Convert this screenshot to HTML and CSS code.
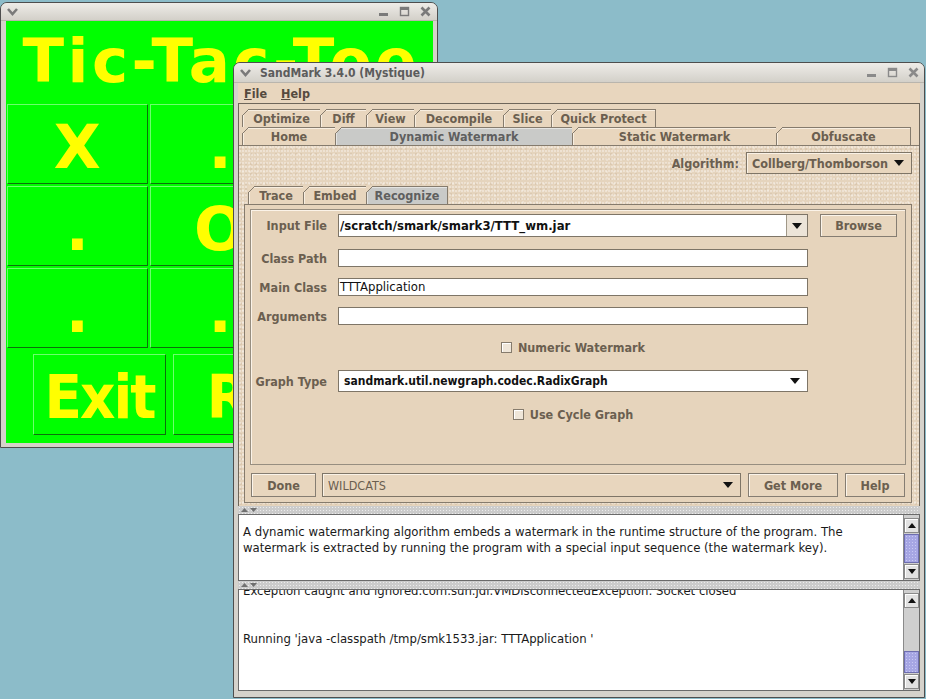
FILE: index.html
```html
<!DOCTYPE html>
<html>
<head>
<meta charset="utf-8">
<title>SandMark</title>
<link rel="stylesheet" href="styles.css">
</head>
<body>
<div class="win ttt">
  <div class="tbar ttt-bar">
    <svg class="ico" width="11" height="9" viewBox="0 0 11 9"><polyline points="1,2 5.5,7 10,2" fill="none" stroke="#7a7a7a" stroke-width="2.6"/></svg>
    <div class="ctrls">
      <svg class="ico" width="11" height="11" viewBox="0 0 11 11"><rect x="1" y="7" width="9" height="3" fill="#7a7a7a"/></svg>
      <svg class="ico" width="11" height="11" viewBox="0 0 11 11"><rect x="1.5" y="1.5" width="8" height="8" fill="none" stroke="#7a7a7a" stroke-width="1.4"/><rect x="1" y="1" width="9" height="3" fill="#7a7a7a"/></svg>
      <svg class="ico" width="11" height="11" viewBox="0 0 11 11"><path d="M1.5 1.5L9.5 9.5M9.5 1.5L1.5 9.5" stroke="#7a7a7a" stroke-width="2.6"/></svg>
    </div>
  </div>
  <div class="ttt-body">
    <div class="ttt-title">Tic-Tac-Toe</div>
    <div class="ttt-grid">
      <div class="cell">X</div><div class="cell">.</div><div class="cell">.</div>
      <div class="cell">.</div><div class="cell">O</div><div class="cell">.</div>
      <div class="cell">.</div><div class="cell">.</div><div class="cell">.</div>
    </div>
    <div class="ttt-btns">
      <div class="tbtn exit">Exit</div>
      <div class="tbtn reset">Reset</div>
    </div>
  </div>
</div>

<div class="win sm">
  <div class="tbar sm-bar">
    <svg class="ico" width="11" height="9" viewBox="0 0 11 9"><polyline points="1,2 5.5,7 10,2" fill="none" stroke="#7a7a7a" stroke-width="2.6"/></svg>
    <span class="wtitle">SandMark 3.4.0 (Mystique)</span>
    <div class="ctrls">
      <svg class="ico" width="11" height="11" viewBox="0 0 11 11"><rect x="1" y="7" width="9" height="3" fill="#8a8a8a"/></svg>
      <svg class="ico" width="11" height="11" viewBox="0 0 11 11"><rect x="1.5" y="1.5" width="8" height="8" fill="none" stroke="#8a8a8a" stroke-width="1.4"/><rect x="1" y="1" width="9" height="3" fill="#8a8a8a"/></svg>
      <svg class="ico" width="11" height="11" viewBox="0 0 11 11"><path d="M1.5 1.5L9.5 9.5M9.5 1.5L1.5 9.5" stroke="#8a8a8a" stroke-width="2.6"/></svg>
    </div>
  </div>
  <div class="sm-body">
    <div class="menubar">
      <span class="menu">File</span>
      <span class="menu">Help</span>
    </div>
    <div class="mainpane">
      <div class="tabrows">
        <div class="tabrow">
          <div class="tab w-opt">Optimize</div>
          <div class="tab w-diff">Diff</div>
          <div class="tab w-view">View</div>
          <div class="tab w-dec">Decompile</div>
          <div class="tab w-slice">Slice</div>
          <div class="tab w-qp">Quick Protect</div>
        </div>
        <div class="tabrow">
          <div class="tab w-home">Home</div>
          <div class="tab w-dyn sel">Dynamic Watermark</div>
          <div class="tab w-stat">Static Watermark</div>
          <div class="tab w-obf">Obfuscate</div>
        </div>
      </div>
      <div class="content">
        <div class="algrow">
          <span class="lbl">Algorithm:</span>
          <div class="combo alg"><span class="ctext">Collberg/Thomborson</span><svg class="tri" width="10" height="6" viewBox="0 0 10 6"><path d="M0 0h10L5 6z"/></svg></div>
        </div>
        <div class="tabrow subtabs">
          <div class="tab w-trace">Trace</div>
          <div class="tab w-embed">Embed</div>
          <div class="tab w-recog sel">Recognize</div>
        </div>
        <div class="subpane">
          <div class="formbox">
            <div class="frow r-input">
              <span class="lbl">Input File</span>
              <div class="ecombo">
                <span class="field bold">/scratch/smark/smark3/TTT_wm.jar</span>
                <span class="abtn"><svg class="tri" width="10" height="6" viewBox="0 0 10 6"><path d="M0 0h10L5 6z"/></svg></span>
              </div>
              <div class="btn">Browse</div>
            </div>
            <div class="frow r-txt">
              <span class="lbl">Class Path</span>
              <div class="tfield"></div>
            </div>
            <div class="frow r-txt">
              <span class="lbl">Main Class</span>
              <div class="tfield">TTTApplication</div>
            </div>
            <div class="frow r-txt">
              <span class="lbl">Arguments</span>
              <div class="tfield"></div>
            </div>
            <div class="frow r-chk r-num">
              <span></span>
              <div class="chk"><span class="box"></span><span class="lbl">Numeric Watermark</span></div>
            </div>
            <div class="frow r-graph">
              <span class="lbl">Graph Type</span>
              <div class="combo white"><span class="ctext dark">sandmark.util.newgraph.codec.RadixGraph</span><svg class="tri" width="10" height="6" viewBox="0 0 10 6"><path d="M0 0h10L5 6z"/></svg></div>
            </div>
            <div class="frow r-chk r-cyc">
              <span></span>
              <div class="chk"><span class="box"></span><span class="lbl">Use Cycle Graph</span></div>
            </div>
          </div>
          <div class="bottomrow">
            <div class="btn b-done">Done</div>
            <div class="combo b-wild"><span class="ctext light">WILDCATS</span><svg class="tri" width="10" height="6" viewBox="0 0 10 6"><path d="M0 0h10L5 6z"/></svg></div>
            <div class="btn b-more">Get More</div>
            <div class="btn b-help">Help</div>
          </div>
        </div>
      </div>
    </div>
    <div class="divider">
      <svg width="7" height="4" viewBox="0 0 7 4"><path d="M0 4h7L3.5 0z" fill="#707070"/></svg>
      <svg width="7" height="4" viewBox="0 0 7 4"><path d="M0 0h7L3.5 4z" fill="#707070"/></svg>
    </div>
    <div class="tarea ta-desc">
      <div class="txt"><div class="txt-in">A dynamic watermarking algorithm embeds a watermark in the runtime structure of the program. The<br>watermark is extracted by running the program with a special input sequence (the watermark key).</div></div>
      <div class="sbar">
        <div class="sbtn"><svg width="8" height="5" viewBox="0 0 8 5"><path d="M0 5h8L4 0z"/></svg></div>
        <div class="thumb"></div>
        <div class="sbtn"><svg width="8" height="5" viewBox="0 0 8 5"><path d="M0 0h8L4 5z"/></svg></div>
      </div>
    </div>
    <div class="divider">
      <svg width="7" height="4" viewBox="0 0 7 4"><path d="M0 4h7L3.5 0z" fill="#707070"/></svg>
      <svg width="7" height="4" viewBox="0 0 7 4"><path d="M0 0h7L3.5 4z" fill="#707070"/></svg>
    </div>
    <div class="tarea ta-cons">
      <div class="txt"><div class="txt-in cons-in">Exception caught and ignored.com.sun.jdi.VMDisconnectedException: Socket closed<br><br><br>Running 'java -classpath /tmp/smk1533.jar: TTTApplication '</div></div>
      <div class="sbar">
        <div class="sbtn"><svg width="8" height="5" viewBox="0 0 8 5"><path d="M0 5h8L4 0z"/></svg></div>
        <div class="track"></div>
        <div class="thumb small"></div>
        <div class="sbtn"><svg width="8" height="5" viewBox="0 0 8 5"><path d="M0 0h8L4 5z"/></svg></div>
      </div>
    </div>
  </div>
</div>
</body>
</html>
```
FILE: styles.css
```css
* { box-sizing: border-box; }
html, body { margin: 0; padding: 0; }
body {
  width: 926px; height: 699px; overflow: hidden; position: relative;
  background: #8cbcc9;
  font-family: "DejaVu Sans Condensed", "DejaVu Sans", sans-serif;
  font-stretch: condensed;
}

/* ---------- windows ---------- */
.win {
  position: absolute;
  border: 1px solid #4e4e4e;
  border-radius: 7px 7px 0 0;
  background: #d5d2cb;
  display: flex; flex-direction: column;
}
.ttt { left: 0; top: 2px; width: 438px; height: 446px; }
.sm { left: 233px; top: 62px; width: 692px; height: 636px; }

.tbar {
  display: flex; align-items: center;
  background: linear-gradient(#eeece8, #d3d0c9);
  border-radius: 6px 6px 0 0;
  border-bottom: 1px solid #b9b5ad;
  flex: none;
}
.ttt-bar { height: 18px; padding: 0 6px 0 6px; }
.sm-bar { height: 20px; padding: 0 5px 0 6px; }
.ctrls { margin-left: auto; display: flex; gap: 10px; align-items: center; }
.ico { display: block; flex: none; }
.wtitle {
  margin-left: 9px; font-size: 12px; font-weight: bold; color: #5c5c5c;
}

/* ---------- tic tac toe ---------- */
.ttt-body {
  flex: 1; margin: 0 4px 4px 5px; background: #00ff00;
  display: flex; flex-direction: column;
  font-family: "DejaVu Sans", sans-serif; font-stretch: normal;
  font-weight: bold; color: #ffff00;
}
.ttt-title {
  height: 83px; padding-top: 4px; text-align: center;
  font-size: 61px; line-height: 72px; white-space: nowrap;
  letter-spacing: 3.5px; text-indent: 3.5px;
}
.ttt-grid {
  display: grid; grid-template-columns: repeat(3, 1fr);
  grid-auto-rows: 80px; gap: 2px; margin-left: 1px;
}
.cell {
  border: 1px solid; border-color: #6dff6d #0d700d #0d700d #6dff6d;
  text-align: center; font-size: 61px; line-height: 78px; padding-top: 3px;
  overflow: hidden;
}
.ttt-btns { display: flex; justify-content: center; gap: 7px; margin-top: 6px; }
.tbtn {
  height: 81px; border: 1px solid; border-color: #6dff6d #0d700d #0d700d #6dff6d;
  text-align: center; font-family: "DejaVu Sans Condensed", "DejaVu Sans", sans-serif;
  font-stretch: condensed; font-size: 61px; line-height: 79px; padding-top: 2px;
  letter-spacing: -2px; overflow: hidden; white-space: nowrap;
}
.exit { width: 133px; }
.reset { width: 233px; }

/* ---------- sandmark ---------- */
.sm-body {
  flex: 1; display: flex; flex-direction: column;
  padding: 0 4px 6px 4px;
}
.menubar {
  height: 20px; flex: none; background: #e8d6be;
  display: flex; align-items: center; gap: 14px; padding-left: 6px;
  font-size: 12.5px; font-weight: bold; color: #554a3e;
}
.menu::first-letter { text-decoration: underline; }

.mainpane {
  height: 403px; flex: none; border: 1px solid #6e665a;
  background: #e8d6be; display: flex; flex-direction: column;
}
.tabrows { padding: 5px 0 0 3px; flex: none; }
.tabrow { display: flex; height: 18px; }
.tab {
  position: relative; height: 18px; flex: none;
  border: 1px solid #857b6d; border-bottom: none; margin-right: -1px;
  background: #e8d6be; box-shadow: inset 1px 1px 0 #f8eee0;
  display: flex; align-items: center; justify-content: center;
  font-size: 12.5px; font-weight: bold; color: #6b5f50; white-space: nowrap;
}
.tab::before {
  content: ""; position: absolute; left: -1px; top: -1px; width: 7px; height: 7px;
  background: linear-gradient(135deg, #e8d6be 0, #e8d6be calc(50% - 0.6px), #857b6d calc(50% - 0.6px), #857b6d calc(50% + 0.6px), transparent calc(50% + 0.6px));
}
.tab.sel { background: #c9cac8; box-shadow: inset 1px 1px 0 #e4e4e2; color: #5f5f5f; }
.w-opt { width: 79px; } .w-diff { width: 47px; } .w-view { width: 49px; }
.w-dec { width: 90px; } .w-slice { width: 49px; } .w-qp { width: 105px; }
.w-home { width: 94px; } .w-dyn { width: 238px; } .w-stat { width: 205px; } .w-obf { width: 135px; }
.w-trace { width: 56px; } .w-embed { width: 64px; } .w-recog { width: 82px; }

.content {
  flex: 1; border-top: 1px solid #857b6d;
  padding: 6px 7px 3px 5px;
  background-color: #e5d4bd;
  background-image:
    radial-gradient(circle at 1px 1px, rgba(255,255,255,0.45) 0.6px, transparent 1px),
    radial-gradient(circle at 2px 3px, rgba(150,120,90,0.16) 0.6px, transparent 1.1px),
    radial-gradient(circle at 4px 2px, rgba(255,255,255,0.35) 0.6px, transparent 1px);
  background-size: 3px 4px, 5px 5px, 7px 6px;
  display: flex; flex-direction: column;
}
.lbl { font-size: 12.5px; font-weight: bold; color: #6b5f50; white-space: nowrap; }
.algrow { height: 22px; display: flex; justify-content: flex-end; align-items: center; gap: 7px; flex: none; }

.combo {
  height: 22px; display: flex; align-items: center;
  border: 1px solid #7e7567; background: #e8d6be; box-shadow: inset 1px 1px 0 #faf2e6;
  padding: 0 7px 0 5px;
}
.combo .ctext { flex: 1; font-size: 12.5px; font-weight: bold; color: #6b5f50; white-space: nowrap; overflow: hidden; }
.combo .ctext.dark { color: #111; font-size: 12px; }
.combo .ctext.light { font-weight: normal; font-size: 12.5px; color: #6b5f50; }
.combo.white { background: #fff; box-shadow: none; }
.alg { width: 166px; }
.tri { display: block; flex: none; fill: #111; }

.subtabs { margin-top: 12px; padding-left: 4px; flex: none; }
.subpane {
  height: 299px; flex: none; border: 1px solid #857b6d; background: #e6d4bc;
  padding: 4px 5px 0 5px;
}
.formbox {
  height: 256px; border: 1px solid #978e80; box-shadow: inset 1px 1px 0 #fbf3e8;
  display: flex; flex-direction: column;
}
.frow {
  display: grid; grid-template-columns: 76px 470px 78px; column-gap: 11px;
  align-items: center; flex: none;
}
.frow > .lbl { text-align: right; }
.r-input { height: 23px; margin-top: 4px; }
.r-input .btn { margin-left: 1px; height: 23px; }
.r-txt { height: 18px; margin-top: 11px; }
.r-txt:nth-child(2) { margin-top: 12px; }
.r-chk { height: 16px; }
.r-num { margin-top: 14px; }
.r-graph { height: 22px; margin-top: 15px; }
.r-cyc { margin-top: 14px; }

.ecombo { height: 23px; display: flex; border: 1px solid #7e7567; background: #fff; }
.field { flex: 1; font-size: 13px; line-height: 21px; color: #111; padding-left: 1px; white-space: nowrap; overflow: hidden; }
.field.bold { font-weight: bold; }
.abtn {
  width: 21px; border-left: 1px solid #a09888; background: #ece4d8;
  display: flex; align-items: center; justify-content: center;
}
.tfield {
  height: 18px; border: 1px solid #7e7567; background: #fff;
  font-size: 13px; line-height: 16px; color: #111; padding-left: 1px; white-space: nowrap;
}
.chk { display: flex; align-items: center; justify-content: center; gap: 6px; }
.chk .box {
  width: 11px; height: 11px; border: 1px solid #857b6d; background: #efe6d9;
  box-shadow: inset 1px 1px 0 #fff;
}
.chk .lbl { font-weight: bold; font-size: 12.5px; color: #6b5f50; }

.btn {
  height: 24px; border: 1px solid #857d72; background: #e8d6be;
  box-shadow: inset 1px 1px 0 #fbf4ea;
  display: flex; align-items: center; justify-content: center;
  font-size: 12.5px; font-weight: bold; color: #6b5f50; white-space: nowrap;
}
.bottomrow { display: flex; margin-top: 8px; margin-left: 1px; height: 24px; }
.b-done { width: 65px; }
.b-wild { width: 419px; height: 24px; margin-left: 6px; }
.b-more { width: 90px; margin-left: 7px; }
.b-help { width: 60px; margin-left: 7px; }

.divider {
  height: 8px; flex: none; display: flex; align-items: center; gap: 2px; padding-left: 3px;
  background-color: #cbcbcb;
  background-image: radial-gradient(circle, #ececec 0.7px, transparent 0.9px);
  background-size: 3px 3px;
}
.divider svg { display: block; }

.tarea { border: 1px solid #6a6a6a; background: #fff; display: flex; flex: none; }
.ta-desc { height: 67px; }
.ta-cons { height: 102px; }
.txt { flex: 1; overflow: hidden; padding: 0 4px; }
.txt-in { font-size: 13px; line-height: 16px; color: #1a1a1a; white-space: nowrap; padding-top: 9px; }
.cons-in { padding-top: 0; margin-top: -7px; }

.sbar {
  width: 16px; flex: none; border-left: 1px solid #8a8a8a; background: #cfcfcf;
  display: flex; flex-direction: column; padding: 3px 0 1px 0;
}
.sbtn {
  height: 15px; flex: none; background: #e2e2e2; border: 1px solid #8a8a8a;
  box-shadow: inset 1px 1px 0 #fff;
  display: flex; align-items: center; justify-content: center;
}
.sbtn svg { display: block; fill: #111; }
.thumb {
  flex: 1; margin: 1px 0;
  border: 1px solid #6e6eb0; background-color: #a6a6e4;
  background-image: radial-gradient(circle, #c8c8f4 0.7px, transparent 0.9px);
  background-size: 3px 3px;
}
.thumb.small { flex: none; height: 22px; }
.track { flex: 1; }
```
